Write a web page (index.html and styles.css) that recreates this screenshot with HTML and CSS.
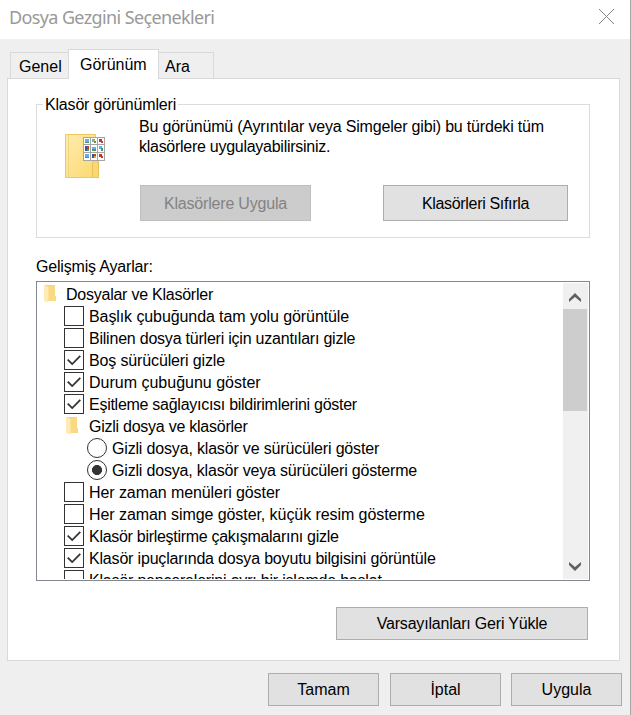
FILE: index.html
```html
<!DOCTYPE html>
<html lang="tr">
<head>
<meta charset="utf-8">
<title>Dosya Gezgini Seçenekleri</title>
<link rel="stylesheet" href="styles.css">
</head>
<body>
<svg class="defs" width="0" height="0" aria-hidden="true">
  <defs>
    <linearGradient id="fold" x1="0" y1="0" x2="1" y2="1"><stop offset="0" stop-color="#ffecae"/><stop offset="1" stop-color="#fbd86e"/></linearGradient>
    <symbol id="folder" viewBox="0 0 14 18">
      <path fill="#f6d67e" d="M0 0h11v11h1v5H2z"/>
      <path fill="#f9d981" d="M5 1h6v10h1v5H4z"/>
      <path fill="#ffebb5" d="M0 0l4.500 2v15.500L0 16z"/>
    </symbol>
    <symbol id="check" viewBox="0 0 20 20"><path d="M3 9.500l5 5 9-9" fill="none" stroke="#333" stroke-width="2"/></symbol>
  </defs>
</svg>
<main class="window">
  <header class="titlebar">
    <h1 class="title">Dosya Gezgini Seçenekleri</h1>
    <svg class="close" width="17" height="17" viewBox="0 0 17 17"><path d="M1 1l15 15M16 1L1 16" stroke="#858585" stroke-width="1"/></svg>
  </header>
  <nav class="tabs">
    <span class="tab tab-first">Genel</span>
    <span class="tab tab-active">Görünüm</span>
    <span class="tab tab-last">Ara</span>
  </nav>
  <section class="panel">
    <section class="group">
      <h2 class="legend">Klasör görünümleri</h2>
      <svg class="group-icon" width="41" height="46" viewBox="0 0 41 46">
        <path d="M.5.500h30V27h3v16.500H.5z" fill="url(#fold)" stroke="#ecc85e"/>
        <path d="M3.500 1v42" stroke="#f3d67c"/>
        <path d="M27.500 43.500V30q0-3 3-4 3 1 3 4v13.500z" fill="#f9d873" stroke="#e9c35a"/>
        <path d="M18 3h22v24H18z" fill="#a5a5a5"/>
        <path fill="#fff" d="M19 4h6v6h-6zM26 4h6v6h-6zM33 4h6v6h-6zM19 11h6v7h-6zM26 11h6v7h-6zM33 11h6v7h-6zM19 19h6v7h-6zM26 19h6v7h-6zM33 19h6v7h-6z"/>
        <path fill="#69aee0" d="M20 5h4v3h-4zM27 5h3v3h-3zM27 13h4v2h-4zM34 12h3v3h-3zM20 20h4v3h-4z"/>
        <path fill="#4d9a55" d="M20 8h4v1h-4zM29 7h2v2h-2zM27 15h4v2h-4zM36 14h2v3h-2zM20 23h4v1h-4zM22 15h2v2h-2z"/>
        <path fill="#c93a22" d="M34 5h3v3h-3zM22 12h2v3h-2zM29 20h2v2h-2zM34 20h3v3h-3zM36 7h2v2h-2zM36 22h2v2h-2z"/>
        <path fill="#3455a4" d="M20 12h2v5h-2zM27 20h2v4h-2z"/>
        <path d="M29 22h2v2h-2zM29 6h1v1h-1z" fill="#e0ad36"/>
      </svg>
      <div class="group-body">
        <p class="hint"><span class="h1">Bu görünümü (Ayrıntılar veya Simgeler gibi) bu türdeki tüm</span><br><span class="h2">klasörlere uygulayabilirsiniz.</span></p>
        <div class="group-buttons">
          <button class="btn apply" disabled>Klasörlere Uygula</button>
          <button class="btn reset">Klasörleri Sıfırla</button>
        </div>
      </div>
    </section>
    <h2 class="label">Gelişmiş Ayarlar:</h2>
    <div class="listbox">
      <ul class="tree">
        <li class="row"><svg class="folder" width="14" height="18"><use href="#folder"/></svg><span class="t0">Dosyalar ve Klasörler</span></li>
        <li class="row l1"><i class="box"></i><span class="t1">Başlık çubuğunda tam yolu görüntüle</span></li>
        <li class="row l1"><i class="box"></i><span class="t2">Bilinen dosya türleri için uzantıları gizle</span></li>
        <li class="row l1"><i class="box"><svg width="18" height="18"><use href="#check"/></svg></i><span class="t3">Boş sürücüleri gizle</span></li>
        <li class="row l1"><i class="box"><svg width="18" height="18"><use href="#check"/></svg></i><span class="t4">Durum çubuğunu göster</span></li>
        <li class="row l1"><i class="box"><svg width="18" height="18"><use href="#check"/></svg></i><span class="t5">Eşitleme sağlayıcısı bildirimlerini göster</span></li>
        <li class="row l1"><svg class="folder nested" width="14" height="18"><use href="#folder"/></svg><span class="t6">Gizli dosya ve klasörler</span></li>
        <li class="row l2"><i class="radio"></i><span class="t7">Gizli dosya, klasör ve sürücüleri göster</span></li>
        <li class="row l2"><i class="radio on"></i><span class="t8">Gizli dosya, klasör veya sürücüleri gösterme</span></li>
        <li class="row l1"><i class="box"></i><span class="t9">Her zaman menüleri göster</span></li>
        <li class="row l1"><i class="box"></i><span class="t10">Her zaman simge göster, küçük resim gösterme</span></li>
        <li class="row l1"><i class="box"><svg width="18" height="18"><use href="#check"/></svg></i><span class="t11">Klasör birleştirme çakışmalarını gizle</span></li>
        <li class="row l1"><i class="box"><svg width="18" height="18"><use href="#check"/></svg></i><span class="t12">Klasör ipuçlarında dosya boyutu bilgisini görüntüle</span></li>
        <li class="row l1"><i class="box"></i><span class="t13">Klasör pencerelerini ayrı bir işlemde başlat</span></li>
      </ul>
      <div class="scrollbar">
        <svg class="arrow" width="12" height="10" viewBox="0 0 12 10"><path d="M0 9V6l6-6 6 6v3L6 4z" fill="#606060"/></svg>
        <div class="thumb"></div>
        <svg class="arrow down" width="12" height="10" viewBox="0 0 12 10"><path d="M0 1v3l6 6 6-6V1L6 6z" fill="#606060"/></svg>
      </div>
    </div>
    <button class="btn restore">Varsayılanları Geri Yükle</button>
  </section>
  <footer class="actions">
    <button class="btn ok">Tamam</button>
    <button class="btn cancel">İptal</button>
    <button class="btn commit">Uygula</button>
  </footer>
</main>
</body>
</html>
```
FILE: styles.css
```css
* { box-sizing: border-box; }
body { margin: 0; font: 16px/20px "Liberation Sans", Arial, sans-serif; color: #000; background: #efefef; }
h1, h2, p, ul { margin: 0; padding: 0; font-size: inherit; font-weight: normal; }
.defs { display: block; height: 0; }
.window { width: 631px; height: 715px; overflow: hidden; border-right: 1px solid #a6a6a6; background: #efefef; white-space: nowrap; }
.titlebar { height: 39px; background: #fff; display: flex; justify-content: space-between; padding: 8px 15px 0 9px; }
.title { font: 18px/18px "Noto Sans", "Open Sans", sans-serif; color: #999; letter-spacing: -0.62px; }
.close { display: block; }
.tabs { height: 39px; display: flex; align-items: flex-end; padding-left: 10px; }
.tab { height: 26px; border: 1px solid #d9d9d9; border-bottom: 0; line-height: 28px; padding-left: 8px; }
.tab-first { width: 58px; border-right: 0; }
.tab-active { width: 91px; height: 30px; margin-bottom: -1px; background: #fff; padding-left: 11px; line-height: 29px; position: relative; }
.tab-last { width: 55px; border-left: 0; padding-left: 6px; }
.panel { width: 613px; height: 583px; margin-left: 7px; background: #fff; border: 1px solid #d9d9d9; padding: 25px 29px 0 28px; display: flex; flex-direction: column; }
.group { height: 134px; border: 1px solid #dcdcdc; display: flex; padding-left: 28px; position: relative; flex: none; }
.legend { position: absolute; left: 6px; top: -10px; background: #fff; padding: 0 2px; letter-spacing: -.18px; }
.group-icon { margin-top: 29px; flex: none; }
.group-body { margin: 12px 0 0 33px; }
.h1 { letter-spacing: -.19px; }
.h2 { letter-spacing: -.27px; }
.group-buttons { display: flex; margin: 28px 0 0 1px; gap: 72px; }
.btn { font: inherit; color: #000; background: #e1e1e1; border: 1px solid #adadad; border-radius: 0; padding: 0; height: 33px; text-align: center; }
.btn:disabled { color: #838383; background: #ccc; border-color: #bfbfbf; }
.apply { width: 171px; height: 36px; padding-top: 2px; letter-spacing: -.2px; }
.reset { width: 185px; height: 36px; padding-top: 2px; letter-spacing: -.32px; }
.label { margin-top: 19px; height: 24px; flex: none; letter-spacing: -.18px; }
.listbox { height: 300px; border: 1px solid #828790; padding: 1px; display: flex; justify-content: space-between; flex: none; }
.tree { list-style: none; height: 296px; overflow: hidden; padding-left: 5px; flex: 1; }
.row { height: 22px; display: flex; align-items: center; }
.row span { padding-top: 2px; }
.l1 { padding-left: 21px; }
.l2 { padding-left: 44px; }
.t0 { letter-spacing: -.24px; }
.t1 { letter-spacing: -.09px; }
.t2 { letter-spacing: -.22px; }
.t3 { letter-spacing: -.14px; }
.t5 { letter-spacing: -.27px; }
.t6 { letter-spacing: -.25px; }
.t7 { letter-spacing: -.17px; }
.t8 { letter-spacing: -.18px; }
.t9 { letter-spacing: -.08px; }
.t10 { letter-spacing: -.07px; }
.t11 { letter-spacing: -.29px; }
.t12 { letter-spacing: -.18px; }
.t13 { letter-spacing: -.2px; }
.folder { margin: 0 8px 0 1px; }
.nested { margin-left: 2px; margin-right: 9px; }
.box { width: 20px; height: 20px; border: 1px solid #333; margin-right: 5px; flex: none; }
.box svg { display: block; }
.radio { width: 20px; height: 20px; border: 1px solid #333; border-radius: 50%; margin-right: 5px; flex: none; }
.on { background: radial-gradient(circle, #333 0 4.700px, transparent 5.300px); }
.scrollbar { width: 25px; background: #f0f0f0; display: flex; flex-direction: column; }
.arrow { margin: 10px 0 6px 6px; flex: none; }
.thumb { width: 24px; height: 102px; background: #cdcdcd; }
.down { margin: auto 0 8px 6px; }
.restore { width: 252px; margin: 26px 2px 0 0; align-self: flex-end; flex: none; letter-spacing: -.2px; }
.actions { display: flex; justify-content: flex-end; padding: 12px 8px 0 0; gap: 11px; }
.actions .btn { width: 111px; }
.commit { margin-left: -1px; }
```
